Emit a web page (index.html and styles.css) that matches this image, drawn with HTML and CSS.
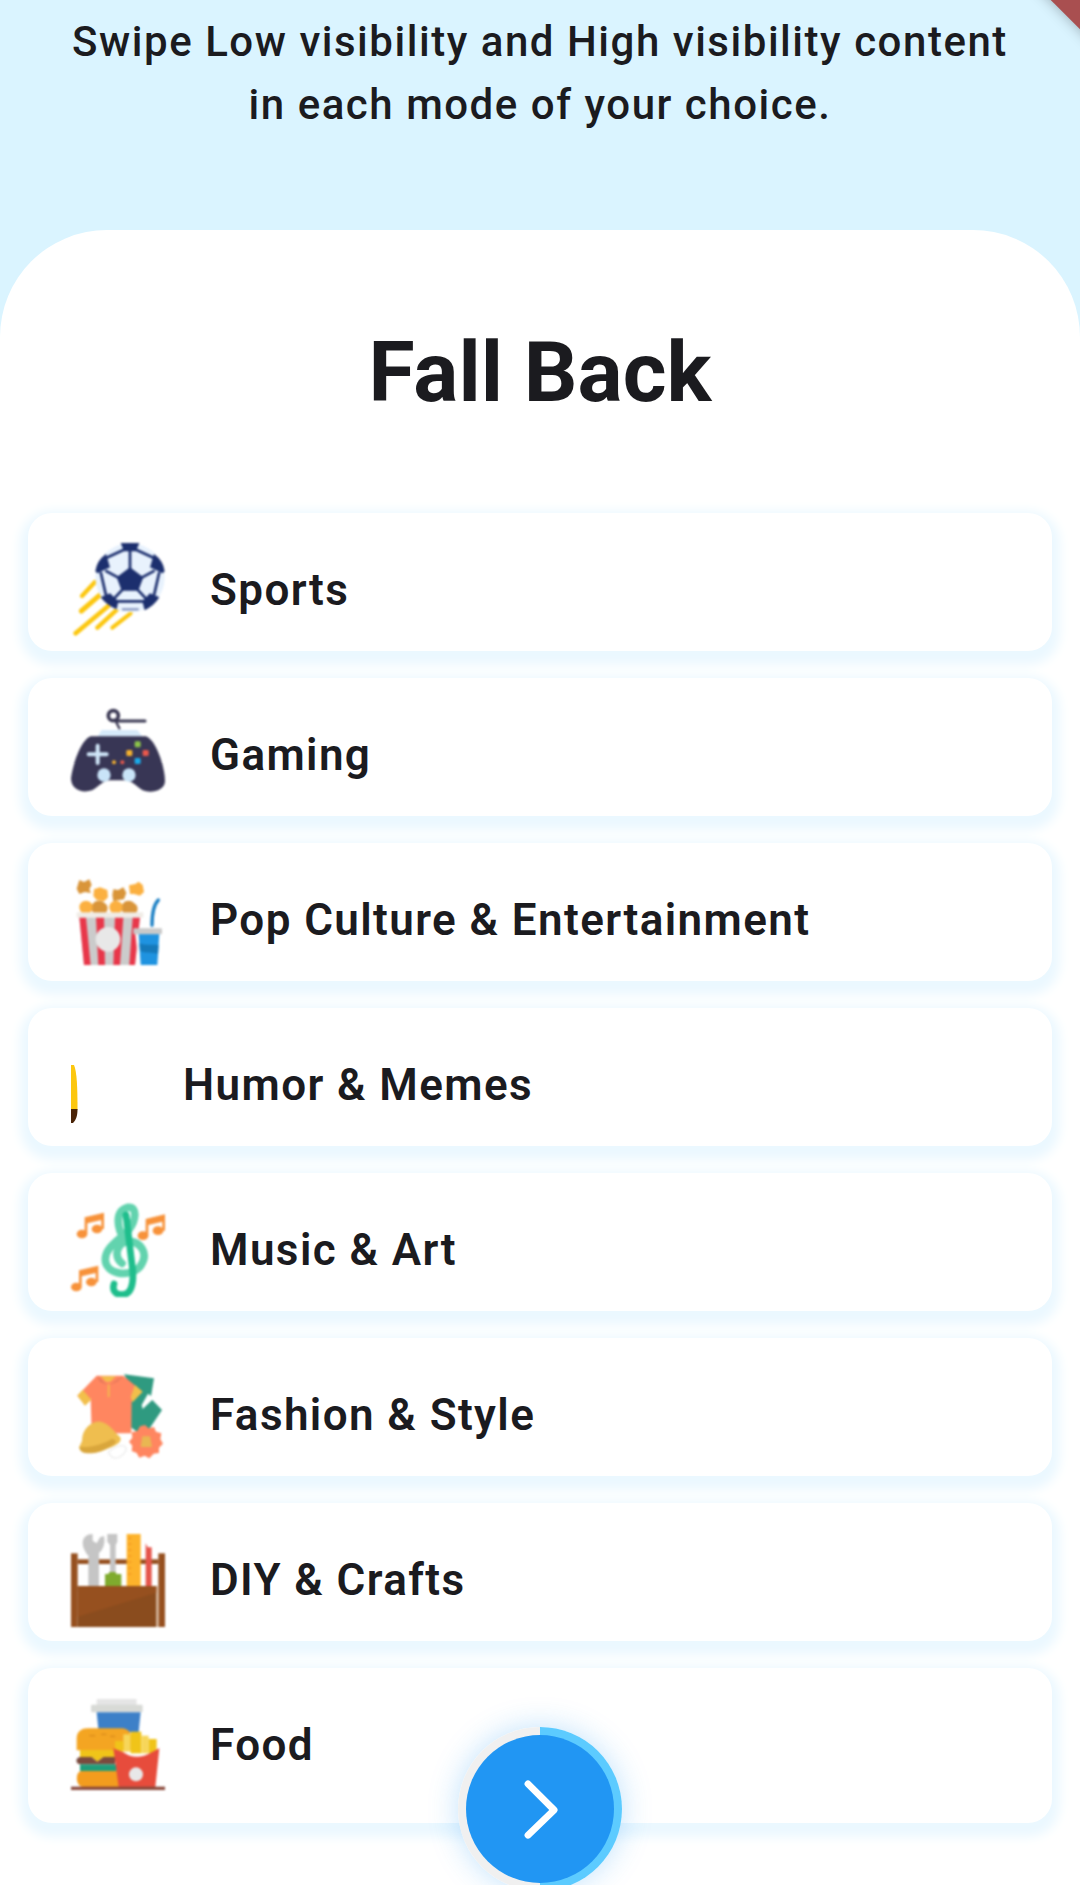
FILE: index.html
```html
<!DOCTYPE html>
<html lang="en">
<head>
<meta charset="utf-8">
<title>Fall Back</title>
<link rel="stylesheet" href="styles.css">
</head>
<body>
<div class="page">
  <header class="intro">
    <p class="intro-text">Swipe Low visibility and High visibility content<br>in each mode of your choice.</p>
  </header>
  <main class="sheet">
    <h1 class="title">Fall Back</h1>
    <ul class="list">
      <li class="card">
        <svg class="icon" viewBox="33 39 282 282" aria-hidden="true">
          <g stroke="#fcc70f" stroke-linecap="round"><path d="M66 198 105 156" stroke-width="13"/><path d="M64 243 128 188" stroke-width="15"/><path d="M47 310 152 222" stroke-width="14"/><path d="M112 293 178 232" stroke-width="13"/><path d="M157 293 212 250" stroke-width="12"/></g>
          <circle cx="210" cy="143" r="104" fill="#e8f2fd"/>
          <g stroke="#1c2f6e" stroke-width="8" fill="none"><path d="M210 118V60M245 143 284 122M232 178 258 206M188 178 162 206M175 143 136 122M195 58 138 84M225 58 282 84M122 126 138 196M298 126 282 196M168 214H252"/><path d="M186 238H236" stroke="#7d8cb9" stroke-width="6"/></g>
          <g fill="#1c2f6e"><path d="M210 112 250 142 235 182H185L170 142Z"/><path d="M182 39H238L228 64H192Z"/><path d="M138 72 150 112 112 130 106 124Q110 92 138 72Z"/><path d="M282 72 270 112 308 130 314 124Q310 92 282 72Z"/><path d="M150 190 175 214 170 238Q140 226 122 202Z"/><path d="M270 190 247 214 254 241Q284 226 298 202Z"/></g>
        </svg>
        <span class="label">Sports</span>
      </li>
      <li class="card">
        <svg class="icon" viewBox="33 39 282 282" aria-hidden="true">
          <path d="M112 125 125 105H232L248 125Z" fill="#d6eafa"/>
          <g stroke="#3a3853" fill="none" stroke-linecap="round"><circle cx="160" cy="62" r="15" stroke-width="11"/><path d="M170 78H255" stroke-width="9"/><path d="M165 74 178 100" stroke-width="7"/></g>
          <path d="M92 124H258C288 135 315 215 315 258C315 288 272 296 248 286C226 272 215 256 195 256H150C130 256 118 274 96 286C66 296 33 284 33 250C38 210 62 135 92 124Z" fill="#383655"/>
          <path d="M86 178H140M113 152V204" stroke="#cfe6f8" stroke-width="12" stroke-linecap="round"/>
          <circle cx="132" cy="240" r="20" fill="#c9e4f8"/><circle cx="207" cy="240" r="20" fill="#c9e4f8"/>
          <rect x="224" y="139" width="18" height="18" rx="4" fill="#8bc34a"/><rect x="199" y="165" width="18" height="18" rx="4" fill="#f3b02f"/><rect x="248" y="165" width="18" height="18" rx="4" fill="#e8584c"/><rect x="224" y="189" width="18" height="18" rx="4" fill="#1ba9e8"/>
          <circle cx="162" cy="202" r="6" fill="#f3b02f"/><circle cx="187" cy="202" r="6" fill="#e8584c"/>
        </svg>
        <span class="label">Gaming</span>
      </li>
      <li class="card">
        <svg class="icon" viewBox="33 39 282 282" aria-hidden="true">
          <g fill="#d9953a"><path d="M58 60 72 66 88 58 95 74 88 88 93 99 74 96 58 102 50 86Z"/><path d="M160 88 175 90 190 82 199 98 192 118 177 120 160 124 157 105Z"/><path d="M100 130C108 118 130 122 134 130C148 136 144 160 132 160H106C94 160 90 136 100 130Z"/><path d="M190 130C198 118 218 122 222 130C238 136 234 160 224 160H196C184 160 180 136 190 130Z"/></g>
          <g fill="#fbb040"><path d="M102 88 120 82 142 90 144 112 132 124 110 120 100 108Z"/><path d="M207 76 226 72 236 65 248 75 252 96 240 107 222 102 210 102Z"/><circle cx="78" cy="142" r="20"/><circle cx="168" cy="142" r="20"/></g>
          <path d="M58 172H240L225 315H72Z" fill="#cbcbcb"/>
          <path d="M58 172H78L92 315H72ZM108 172H132L135 315H115ZM165 172H190L180 315H160ZM218 172H240L225 315H208Z" fill="#e8374a"/>
          <rect x="50" y="157" width="200" height="16" fill="#f0ece6"/>
          <circle cx="144" cy="238" r="37" fill="#e8e8e8"/>
          <path d="M276 196C276 165 280 135 295 120" fill="none" stroke="#1a7fc4" stroke-width="10" stroke-linecap="round"/>
          <path d="M226 222H300L292 315H236Z" fill="#fff"/>
          <path d="M236 222H298L292 315H242Z" fill="#1f93e0"/>
          <path d="M238 250C258 258 278 252 296 256L294 282C275 274 258 282 240 272Z" fill="#1579ba"/>
          <rect x="220" y="205" width="86" height="18" rx="3" fill="#c9c9c9"/>
        </svg>
        <span class="label">Pop Culture &amp; Entertainment</span>
      </li>
      <li class="card">
        <svg class="icon icon-narrow" viewBox="0 0 67 94" aria-hidden="true">
          <path d="M0 27H3C6 34 6.500 50 6.500 72H0Z" fill="#fcc70f"/>
          <path d="M0 71H6.500C6.500 78 5 82 2 85H0Z" fill="#4a2408"/>
        </svg>
        <span class="label">Humor &amp; Memes</span>
      </li>
      <li class="card">
        <svg class="icon" viewBox="213 99 282 282" aria-hidden="true">
          <g fill="none" stroke-linecap="round">
            <path d="M375 212C348 170 345 122 385 112C412 110 410 150 385 182C350 215 316 235 316 268C316 312 385 325 420 290C450 250 420 212 382 214C350 222 340 258 366 280" stroke="#62d3ae" stroke-width="23"/>
            <path d="M378 135 398 300C402 345 392 374 366 374C345 374 336 360 342 342" stroke="#1fbe8c" stroke-width="20"/>
          </g>
          <g id="note" fill="#f7923a"><ellipse cx="246" cy="192" rx="16" ry="13"/><ellipse cx="291" cy="177" rx="16" ry="13"/><path d="M254 192V142L312 128V177H304V150L262 160V192Z"/></g>
          <use href="#note" x="183" y="5"/>
          <use href="#note" x="-17" y="159"/>
        </svg>
        <span class="label">Music &amp; Art</span>
      </li>
      <li class="card">
        <svg class="icon" viewBox="33 9 282 282" aria-hidden="true">
          <path d="M192 28 282 40 272 100 306 135 252 215 210 185 212 105 215 70Z" fill="#2f9a80"/>
          <path d="M248 132 282 100 264 86 245 120Z" fill="#fff"/>
          <path d="M110 32H190L245 78 215 110 214 205H95L92 100 75 120 52 92Z" fill="#ff8660"/>
          <path d="M52 92 68 74 94 104 75 122ZM225 60 248 80 218 112 212 96Z" fill="#f2bf4b"/>
          <path d="M122 34H168L150 50H138Z" fill="#f2bf4b"/>
          <path d="M110 32 142 60 120 50ZM190 32 148 60 172 50Z" fill="#e4775a"/>
          <path d="M146 58V96" stroke="#f2bf4b" stroke-width="5"/>
          <path d="M145 262C170 235 210 235 195 262 175 285 155 285 145 262Z" fill="#fff" stroke="#ececec" stroke-width="4"/>
          <path d="M66 228C66 190 95 168 122 170C150 176 160 198 180 216C190 234 160 245 125 258C95 268 58 268 58 245Z" fill="#efbe4f"/>
          <path d="M58 245C85 250 130 238 155 222C176 226 172 238 125 258C95 268 58 270 58 245Z" fill="#d9a63c"/>
          <path d="M255 180 266 190 282 186 288 200 304 205 301 222 309 236 297 248 297 264 281 266 268 280 254 272 238 278 230 264 215 258 217 242 207 230 217 218 215 202 232 198 240 184Z" fill="#ff8660"/>
          <path d="M247 214H270L276 246H242Z" fill="#e9b752"/>
        </svg>
        <span class="label">Fashion &amp; Style</span>
      </li>
      <li class="card">
        <svg class="icon" viewBox="213 99 282 282" aria-hidden="true">
          <rect x="233" y="178" width="242" height="14" fill="#96501f"/>
          <path d="M265 155H297V258H265Z" fill="#c5c5c5"/>
          <path d="M248 130C248 110 262 102 278 102V122L290 130 300 112 312 108C318 135 305 160 285 165L262 165C254 152 248 142 248 130Z" fill="#c5c5c5"/>
          <path d="M322 102H352V125L347 135V220H330V135L322 125Z" fill="#c5c5c5"/>
          <path d="M315 222H325L328 216H346L350 222H364V258H315Z" fill="#7fab2e"/>
          <rect x="380" y="102" width="42" height="156" fill="#fdb32b"/>
          <path d="M384 115H394M384 132H394M384 150H394M384 168H394M384 186H394M384 204H394M384 222H394" stroke="#f08a1e" stroke-width="3"/>
          <path d="M437 130 443 142H455V258H437Z" fill="#e5544a"/>
          <rect x="213" y="160" width="20" height="224" fill="#96501f"/>
          <rect x="475" y="160" width="20" height="224" fill="#96501f"/>
          <rect x="469" y="258" width="6" height="126" fill="#dcc0a8"/>
          <rect x="233" y="258" width="236" height="126" fill="#8a4c1e"/>
          <path d="M233 258H469V278L233 350Z" fill="#96501f"/>
        </svg>
        <span class="label">DIY &amp; Crafts</span>
      </li>
      <li class="card card-last">
        <svg class="icon" viewBox="33 9 282 282" aria-hidden="true">
          <rect x="110" y="12" width="120" height="20" rx="3" fill="#e5e5e5"/>
          <rect x="93" y="29" width="155" height="23" rx="4" fill="#d8dad6"/>
          <path d="M110 52H242L236 112H116Z" fill="#3d80c8"/>
          <path d="M82 100H185C205 100 215 115 215 135V166H50V130C50 110 65 100 82 100Z" fill="#f4a522"/>
          <path d="M90 122H104M125 118H138M152 124H164" stroke="#d98a1c" stroke-width="4" stroke-linecap="round"/>
          <path d="M60 165H170V186H130L112 200 95 186H60Z" fill="#f0c419"/>
          <path d="M62 186H95L112 200 130 186H165V208H62C45 208 45 186 62 186Z" fill="#7a4a3e"/>
          <rect x="60" y="208" width="110" height="20" fill="#1f9d7a"/>
          <path d="M65 228H180V276H70C45 276 45 228 65 228Z" fill="#f39c1e"/>
          <path d="M190 118H212V170H190Z" fill="#f7d65a"/><path d="M212 110H244V175H212Z" fill="#f0c419"/><path d="M244 122H266V175H244Z" fill="#f7d65a"/><path d="M266 132H290V175H266Z" fill="#f0c419"/><path d="M165 138H190V170H165Z" fill="#f0c419"/>
          <path d="M160 160 190 172C215 190 245 190 275 172L298 160 286 276H176Z" fill="#e74c3c"/>
          <circle cx="228" cy="238" r="21" fill="#e8e8e8"/>
          <rect x="33" y="275" width="282" height="10" fill="#8b4a3c"/>
        </svg>
        <span class="label">Food</span>
      </li>
    </ul>
  </main>
  <div class="banner"></div>
  <button class="fab" type="button" aria-label="Next">
    <svg class="fab-chevron" viewBox="0 0 40 64" aria-hidden="true"><path d="M5 5 32 32 5 58" fill="none" stroke="#fff" stroke-width="7" stroke-linecap="round" stroke-linejoin="round"/></svg>
  </button>
</div>
</body>
</html>
```
FILE: styles.css
```css
* { box-sizing: border-box; }
html, body { margin: 0; padding: 0; }
body { background: #fff; font-family: Roboto, "Liberation Sans", sans-serif; color: #1b1b1f; }
.page { position: relative; width: 1080px; height: 1885px; overflow: hidden; background: #daf4ff; }
.intro { height: 230px; padding-top: 10px; }
.intro-text { margin: 0; text-align: center; font-size: 42px; font-weight: 500; line-height: 63px; letter-spacing: 1.53px; color: #1b1b1f; }
.sheet { height: 1655px; background: #fff; border-radius: 107px 107px 0 0; padding: 0 28px; }
.title { margin: 0; padding-top: 93px; height: 283px; text-align: center; font-size: 84.2px; line-height: 100px; font-weight: 700; color: #1b1b1f; }
.list { list-style: none; margin: 0; padding: 0; display: flex; flex-direction: column; gap: 27px; }
.card { display: flex; align-items: center; gap: 45px; height: 138px; padding: 30px 0 14px 43px; background: #fff; border-radius: 24px; box-shadow: 0 6px 11px 8px #ebf8ff; }
.card-last { height: 155px; padding-bottom: 31px; }
.icon { flex: none; width: 94px; height: 94px; filter: blur(.8px); }
.icon-narrow { width: 67px; filter: none; }
.label { font-size: 44px; font-weight: 600; letter-spacing: 1.4px; color: #1b1b1f; }
.banner { position: absolute; top: -20px; right: -99px; width: 200px; height: 40px; transform: rotate(45deg); background: #a94f50; box-shadow: 0 0 14px rgba(0, 0, 0, .3); }
.fab { position: absolute; left: 458px; bottom: -6px; width: 164px; height: 164px; padding: 0; border: 0; border-radius: 50%; display: flex; align-items: center; justify-content: center; background: conic-gradient(#5ccbff 0 50%, #f0f0f0 50% 100%); box-shadow: 0 0 30px rgba(33, 150, 243, .28); }
.fab::before { content: ""; position: absolute; inset: 8px; border-radius: 50%; background: #2196f3; }
.fab-chevron { position: relative; width: 39px; height: 62px; margin: 2px 0 0 5px; }
```
